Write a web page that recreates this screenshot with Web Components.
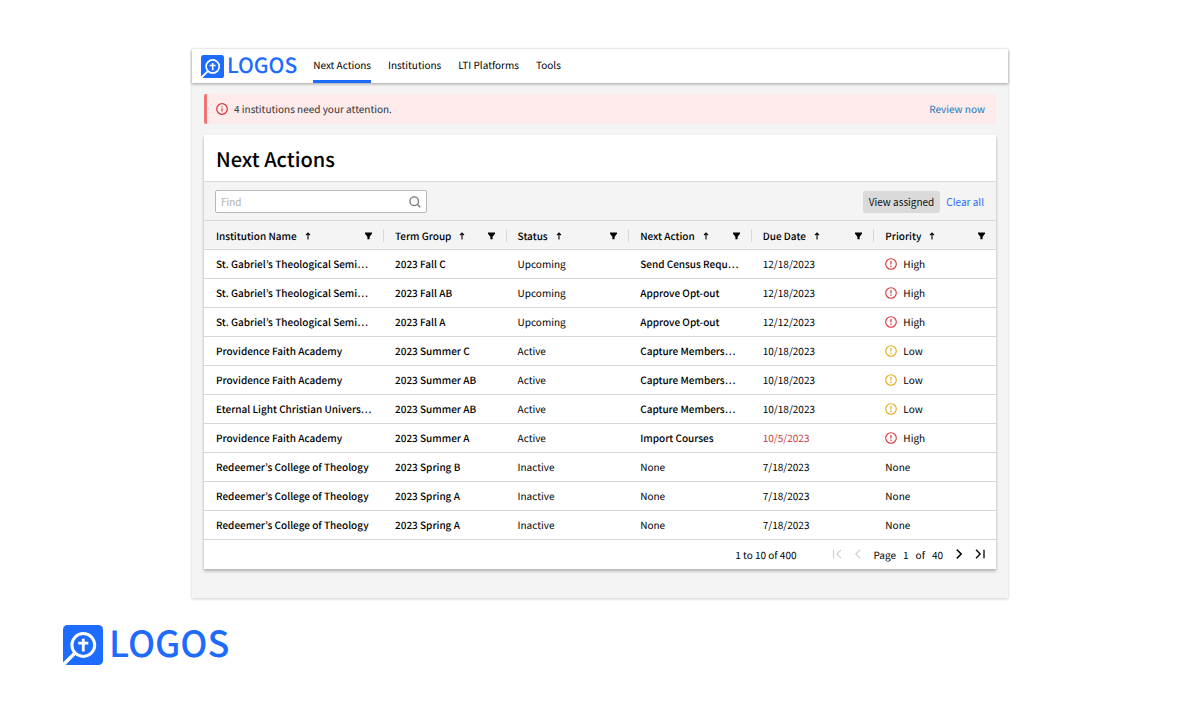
<!DOCTYPE html>
<html lang="en">
<head>
<meta charset="utf-8">
<title>Logos - Next Actions</title>
<style>
  body {
    margin: 0;
    background: #fff;
    color: #000;
    font: 10px/16px "Noto Sans CJK KR", "Noto Sans", sans-serif;
    text-rendering: geometricPrecision;
  }
</style>
</head>
<body>
<next-actions-page></next-actions-page>

<script>
const ICONS = {
  info: `<svg viewBox="0 0 12 12" width="12" height="12" fill="none" stroke="currentColor"><circle cx="6" cy="6" r="5.3" stroke-width="1.2"/><path d="M6 5.2v3.3M6 3.2v1.1" stroke-width="1.1"/></svg>`,
  alert: `<svg viewBox="0 0 12 12" width="12" height="12" fill="none" stroke="currentColor"><circle cx="6" cy="6" r="5.3" stroke-width="1.1"/><path d="M6 3v3.6M6 7.6v1.3" stroke-width="1.2"/></svg>`,
  search: `<svg viewBox="0 0 12 12" width="12" height="12" fill="none" stroke="currentColor" stroke-width="1.3"><circle cx="5.2" cy="5.2" r="4.3"/><path d="M8.3 8.3l3 3"/></svg>`,
  sort: `<svg viewBox="0 0 6 8" width="6" height="8" fill="none" stroke="currentColor" stroke-width="1.1"><path d="M3 7.5V1.2M1 3.1l2-2 2 2"/></svg>`,
  filter: `<svg viewBox="0 0 7 8" width="7" height="8" fill="currentColor"><path d="M0 .5h7v1.2L4.6 4.8v2.4H2.4V4.8L0 1.7z"/></svg>`,
  first: `<svg viewBox="0 0 10 10" width="10" height="10" fill="none" stroke="currentColor" stroke-width="1.1"><path d="M1.5 .8v8.4M9 .8L4.8 5 9 9.2"/></svg>`,
  prev: `<svg viewBox="0 0 10 10" width="10" height="10" fill="none" stroke="currentColor" stroke-width="1.1"><path d="M7.2 .6L2.8 5l4.4 4.4"/></svg>`,
  next: `<svg viewBox="0 0 10 10" width="10" height="10" fill="none" stroke="currentColor" stroke-width="1.5"><path d="M2.8 .6L7.2 5 2.8 9.4"/></svg>`,
  last: `<svg viewBox="0 0 10 10" width="10" height="10" fill="none" stroke="currentColor" stroke-width="1.3"><path d="M1 .8L5.2 5 1 9.2M9 .8v8.4"/></svg>`,
};

class UiIcon extends HTMLElement {
  constructor() {
    super();
    this.attachShadow({ mode: "open" });
  }

  connectedCallback() {
    this.shadowRoot.innerHTML = /* html */ `
      <style>
        :host { display: inline-flex; flex: none; }
        svg { display: block; }
      </style>
      ${ICONS[this.getAttribute("name")]}
    `;
  }
}
customElements.define("ui-icon", UiIcon);

class LogosBrand extends HTMLElement {
  constructor() {
    super();
    this.attachShadow({ mode: "open" });
    this.shadowRoot.innerHTML = /* html */ `
      <style>
        :host { display: inline-flex; }
        a {
          display: flex;
          align-items: center;
          gap: var(--logo-gap, 3px);
          color: #1e6bff;
          text-decoration: none;
        }
        svg { display: block; flex: none; width: var(--logo-mark, 23px); height: var(--logo-mark, 23px); }
        span {
          padding-bottom: var(--logo-drop, 2px);
          font-size: var(--logo-text, 21px);
          line-height: var(--logo-line, 20px);
          font-weight: 500;
        }
      </style>
      <a href="#">
        <svg viewBox="0 0 40 40" fill="none">
          <rect width="40" height="40" rx="4.5" fill="currentColor"/>
          <g stroke="#fff">
            <circle cx="20.3" cy="20" r="11.4" stroke-width="3"/>
            <path d="M12 28L0 40" stroke-width="3.4"/>
            <path d="M20.3 13.8v12.6M15.3 18.2h10" stroke-width="2.8"/>
          </g>
        </svg>
        <span>LOGOS</span>
      </a>
    `;
  }
}
customElements.define("logos-brand", LogosBrand);

class AppNav extends HTMLElement {
  links = ["Next Actions", "Institutions", "LTI Platforms", "Tools"];

  constructor() {
    super();
    this.attachShadow({ mode: "open" });
    this.shadowRoot.innerHTML = /* html */ `
      <style>
        :host { display: block; background: #fff; box-shadow: 0 1px 3px rgba(0, 0, 0, .35); }
        nav { display: flex; gap: 16px; padding: 0 9px; height: 34px; }
        logos-brand { align-items: center; }
        .links { display: flex; gap: 17px; }
        .links a {
          display: flex;
          align-items: center;
          border-bottom: 3px solid transparent;
          color: #000;
          text-decoration: none;
        }
        .links a[aria-current] { border-bottom-color: #1e6bff; }
      </style>
      <nav>
        <logos-brand></logos-brand>
        <div class="links">
          ${this.links.map((link, i) => `<a href="#"${i === 0 ? ' aria-current="page"' : ""}>${link}</a>`).join("")}
        </div>
      </nav>
    `;
  }
}
customElements.define("app-nav", AppNav);

class AlertBanner extends HTMLElement {
  constructor() {
    super();
    this.attachShadow({ mode: "open" });
    this.shadowRoot.innerHTML = /* html */ `
      <style>
        :host {
          display: flex;
          align-items: center;
          gap: 6px;
          padding: 7px 11px 7px 9px;
          border-left: 3px solid #f07575;
          border-radius: 2px;
          background: #fdeaea;
          color: #333;
        }
        ui-icon { color: #d13438; }
        .message { flex: 1; }
      </style>
      <ui-icon name="info"></ui-icon>
      <div class="message"><slot></slot></div>
      <slot name="action"></slot>
    `;
  }
}
customElements.define("alert-banner", AlertBanner);

class TableToolbar extends HTMLElement {
  constructor() {
    super();
    this.attachShadow({ mode: "open" });
    this.shadowRoot.innerHTML = /* html */ `
      <style>
        :host {
          display: flex;
          align-items: center;
          gap: 6px;
          padding: 8px 12px 7px 11px;
          border: solid #d8d8d8;
          border-width: 1px 0;
          background: #f4f4f4;
        }
        label {
          display: flex;
          align-items: center;
          box-sizing: border-box;
          width: 212px;
          height: 23px;
          margin-right: auto;
          padding: 0 5px;
          border: 1px solid #b8b8b8;
          border-radius: 2px;
          background: #fff;
          color: #777;
        }
        input { flex: 1; min-width: 0; padding: 0; border: 0; outline: 0; background: none; font: inherit; }
        input::placeholder { color: #b0b0b0; opacity: 1; }
        button { border: 0; border-radius: 2px; font: inherit; height: 22px; }
        .assigned { padding: 0 6px; background: #dadada; color: #111; }
        .clear { padding: 0; background: none; color: #1e6bff; }
      </style>
      <label><input type="search" placeholder="Find" aria-label="Find"><ui-icon name="search"></ui-icon></label>
      <button class="assigned">View assigned</button>
      <button class="clear">Clear all</button>
    `;
  }
}
customElements.define("table-toolbar", TableToolbar);

class PriorityLabel extends HTMLElement {
  constructor() {
    super();
    this.attachShadow({ mode: "open" });
    this.shadowRoot.innerHTML = /* html */ `
      <style>
        :host { display: flex; align-items: center; gap: 6px; }
        :host([level="High"]) ui-icon { color: #d9363b; }
        :host([level="Low"]) ui-icon { color: #e5ad1c; }
      </style>
      <ui-icon name="alert"></ui-icon><slot></slot>
    `;
  }
}
customElements.define("priority-label", PriorityLabel);

class ActionsTable extends HTMLElement {
  columns = ["Institution Name", "Term Group", "Status", "Next Action", "Due Date", "Priority"];

  rows = [
    ["St. Gabriel’s Theological Semi…", "2023 Fall C", "Upcoming", "Send Census Requ…", "12/18/2023", "High"],
    ["St. Gabriel’s Theological Semi…", "2023 Fall AB", "Upcoming", "Approve Opt-out", "12/18/2023", "High"],
    ["St. Gabriel’s Theological Semi…", "2023 Fall A", "Upcoming", "Approve Opt-out", "12/12/2023", "High"],
    ["Providence Faith Academy", "2023 Summer C", "Active", "Capture Members…", "10/18/2023", "Low"],
    ["Providence Faith Academy", "2023 Summer AB", "Active", "Capture Members…", "10/18/2023", "Low"],
    ["Eternal Light Christian Univers…", "2023 Summer AB", "Active", "Capture Members…", "10/18/2023", "Low"],
    ["Providence Faith Academy", "2023 Summer A", "Active", "Import Courses", "10/5/2023", "High"],
    ["Redeemer’s College of Theology", "2023 Spring B", "Inactive", "None", "7/18/2023", "None"],
    ["Redeemer’s College of Theology", "2023 Spring A", "Inactive", "None", "7/18/2023", "None"],
    ["Redeemer’s College of Theology", "2023 Spring A", "Inactive", "None", "7/18/2023", "None"],
  ];

  constructor() {
    super();
    this.attachShadow({ mode: "open" });
    this.render();
  }

  header(name) {
    return `
      <th scope="col"><div>
        <span>${name}</span>
        <button aria-label="Sort by ${name}"><ui-icon name="sort"></ui-icon></button>
        <button class="filter" aria-label="Filter ${name}"><ui-icon name="filter"></ui-icon></button>
      </div></th>`;
  }

  row([institution, term, status, action, due, priority]) {
    const level = priority === "None" ? priority : `<priority-label level="${priority}">${priority}</priority-label>`;
    return `
      <tr>
        <td class="strong">${institution}</td>
        <td class="strong">${term}</td>
        <td>${status}</td>
        <td${action === "None" ? "" : ' class="strong"'}>${action}</td>
        <td${due === "10/5/2023" ? ' class="overdue"' : ""}>${due}</td>
        <td>${level}</td>
      </tr>`;
  }

  render() {
    this.shadowRoot.innerHTML = /* html */ `
      <style>
        :host { display: block; }
        table { width: 100%; table-layout: fixed; border-collapse: separate; border-spacing: 0; }
        th, td {
          box-sizing: border-box;
          height: 29px;
          padding: 0 0 0 12px;
          border-bottom: 1px solid #d8d8d8;
          text-align: left;
          white-space: nowrap;
        }
        th { padding-top: 1px; background: #f4f4f4; font-weight: 500; }
        th:first-child { width: 22.6%; }
        th div { display: flex; align-items: center; gap: 8px; padding-right: 11px; }
        th + th { background: linear-gradient(#d8d8d8, #d8d8d8) 0 8px / 1px 13px no-repeat #f4f4f4; }
        th button { padding: 0; border: 0; background: none; color: #000; }
        .filter { margin-left: auto; }
        .strong { font-weight: 500; }
        .overdue { color: #cc3b3b; }
      </style>
      <table>
        <thead><tr>${this.columns.map(name => this.header(name)).join("")}</tr></thead>
        <tbody>${this.rows.map(row => this.row(row)).join("")}</tbody>
      </table>
    `;
  }
}
customElements.define("actions-table", ActionsTable);

class TablePager extends HTMLElement {
  constructor() {
    super();
    this.attachShadow({ mode: "open" });
    this.shadowRoot.innerHTML = /* html */ `
      <style>
        :host {
          display: flex;
          align-items: center;
          justify-content: flex-end;
          gap: 35px;
          height: 29px;
          padding: 0 11px;
        }
        div { display: flex; align-items: center; gap: 11px; }
        .page { gap: 7px; }
        button { padding: 0; border: 0; background: none; color: #000; }
        button:disabled { color: #ccc; }
      </style>
      <span>1 to 10 of 400</span>
      <div>
        <button disabled aria-label="First page"><ui-icon name="first"></ui-icon></button>
        <button disabled aria-label="Previous page"><ui-icon name="prev"></ui-icon></button>
        <div class="page"><span>Page</span><span>1</span><span>of</span><span>40</span></div>
        <button aria-label="Next page"><ui-icon name="next"></ui-icon></button>
        <button aria-label="Last page"><ui-icon name="last"></ui-icon></button>
      </div>
    `;
  }
}
customElements.define("table-pager", TablePager);

class NextActionsPage extends HTMLElement {
  constructor() {
    super();
    this.attachShadow({ mode: "open" });
    this.shadowRoot.innerHTML = /* html */ `
      <style>
        :host { display: block; padding: 49px 0 0; }
        .window {
          width: 68%;
          margin: 0 auto;
          background: #f4f4f4;
          box-shadow: 0 1px 3px rgba(0, 0, 0, .2);
        }
        main { display: grid; gap: 11px; padding: 11px 12px 29px; }
        .review { color: #1a78b8; text-decoration: none; }
        .card { background: #fff; box-shadow: 0 2px 3px rgba(0, 0, 0, .3); }
        h1 { margin: 0; padding: 10px 12px 8px; font-size: 20px; line-height: 28px; font-weight: 500; }
        footer { padding: 27px 63px 0; }
        footer logos-brand {
          --logo-mark: 40px;
          --logo-text: 36px;
          --logo-line: 35px;
          --logo-drop: 5px;
          --logo-gap: 6px;
        }
      </style>
      <div class="window">
        <app-nav></app-nav>
        <main>
          <alert-banner>4 institutions need your attention.<a class="review" slot="action" href="#">Review now</a></alert-banner>
          <section class="card">
            <h1>Next Actions</h1>
            <table-toolbar></table-toolbar>
            <actions-table></actions-table>
            <table-pager></table-pager>
          </section>
        </main>
      </div>
      <footer><logos-brand></logos-brand></footer>
    `;
  }
}
customElements.define("next-actions-page", NextActionsPage);
</script>
</body>
</html>
